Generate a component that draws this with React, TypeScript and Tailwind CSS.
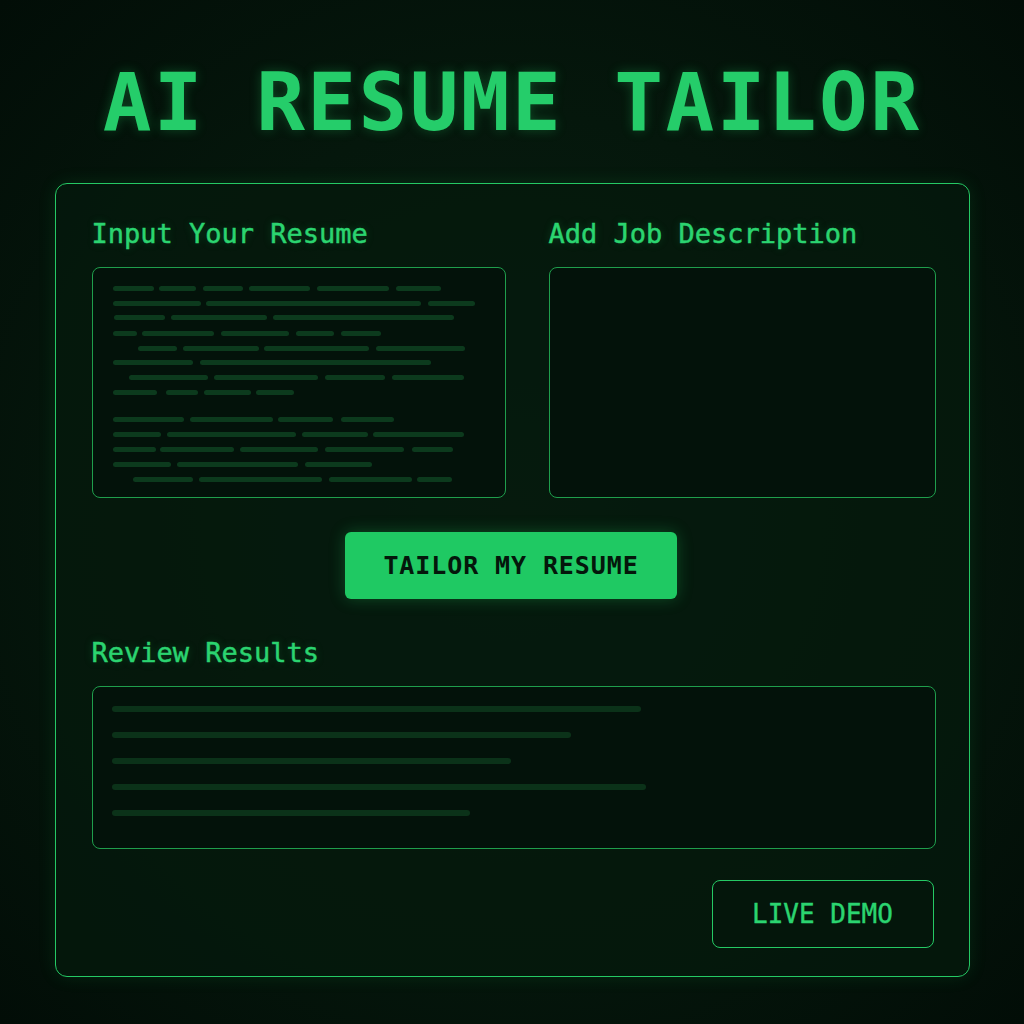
import React from 'react';

const MONO = "font-['DejaVu_Sans_Mono','Liberation_Mono',monospace]";

// resume skeleton: each row is a list of [x0, x1] in page px; box inner left = 93
const resumeRows: { gap: number; segs: [number, number][] }[] = [
  { gap: 0, segs: [[113, 154], [159, 196], [203, 243], [249, 310], [317, 389], [396, 441]] },
  { gap: 10, segs: [[113, 201], [206, 421], [428, 475]] },
  { gap: 9, segs: [[114, 165], [171, 267], [273, 454]] },
  { gap: 11, segs: [[113, 137], [142, 214], [221, 289], [296, 334], [341, 381]] },
  { gap: 10, segs: [[138, 177], [183, 259], [264, 369], [376, 465]] },
  { gap: 9, segs: [[113, 193], [200, 431]] },
  { gap: 10, segs: [[129, 208], [214, 318], [325, 385], [392, 464]] },
  { gap: 10, segs: [[113, 157], [166, 198], [204, 251], [256, 294]] },
  { gap: 22, segs: [[113, 184], [190, 273], [278, 333], [341, 394]] },
  { gap: 10, segs: [[113, 161], [167, 296], [302, 368], [373, 464]] },
  { gap: 10, segs: [[113, 156], [160, 234], [240, 318], [325, 404], [412, 453]] },
  { gap: 10, segs: [[113, 171], [177, 298], [305, 372]] },
  { gap: 10, segs: [[133, 193], [199, 322], [329, 412], [417, 452]] },
];

const resultBars = [529, 459, 399, 534, 358];

function SkeletonRow({ gap, segs }: { gap: number; segs: [number, number][] }) {
  let prev = 93;
  return (
    <div className="flex h-[5px]" style={{ marginTop: gap }}>
      {segs.map(([a, b], i) => {
        const ml = a - prev;
        prev = b;
        return (
          <div
            key={i}
            className="h-full rounded-full bg-[#0c3a1d]"
            style={{ marginLeft: ml, width: b - a }}
          />
        );
      })}
    </div>
  );
}

function Heading({ children }: { children: React.ReactNode }) {
  return (
    <h2 className="text-[27px] leading-none text-[#2bd470] [-webkit-text-stroke:0.5px_#2bd470] [text-shadow:0_0_8px_rgba(34,197,94,0.25)]">
      {children}
    </h2>
  );
}

export default function App() {
  return (
    <div
      className={`min-h-screen w-full flex flex-col items-center bg-[radial-gradient(ellipse_at_center,#0a2013_0%,#05170c_55%,#020d07_100%)] ${MONO}`}
    >
      <h1 className="pt-[62px] text-[81px] leading-none font-bold tracking-[2.4px] text-[#25cd6a] [text-shadow:0_0_12px_rgba(34,197,94,0.3)]">
        AI RESUME TAILOR
      </h1>

      <div className="mt-[40px] w-[915px] h-[794px] rounded-[12px] border border-[#25c964] bg-[#05190d]/80 pl-[36px] pr-[33px] pt-[36px] shadow-[0_0_18px_rgba(34,197,94,0.12)]">
        <div className="flex gap-[43px]">
          <div className="w-[414px]">
            <Heading>Input Your Resume</Heading>
            <div className="mt-[20px] h-[231px] rounded-[8px] border border-[#1f9e4c] bg-[#03120a] pt-[18px]">
              {resumeRows.map((r, i) => (
                <SkeletonRow key={i} gap={r.gap} segs={r.segs} />
              ))}
            </div>
          </div>
          <div className="w-[387px]">
            <Heading>Add Job Description</Heading>
            <div className="mt-[20px] h-[231px] rounded-[8px] border border-[#1f9e4c] bg-[#03120a]" />
          </div>
        </div>

        <div className="mt-[34px] flex justify-center pr-[5px]">
          <button className="w-[332px] h-[67px] rounded-[6px] bg-[#1fc963] text-[25px] font-bold leading-none tracking-[0.9px] text-[#04170b] shadow-[0_0_16px_rgba(34,197,94,0.3)]">
            TAILOR MY RESUME
          </button>
        </div>

        <div className="mt-[40px]">
          <Heading>Review Results</Heading>
        </div>
        <div className="mt-[20px] h-[163px] rounded-[8px] border border-[#1f9e4c] bg-[#03120a] pl-[19px] pt-[19px] flex flex-col gap-[20px]">
          {resultBars.map((w, i) => (
            <div key={i} className="h-[6px] rounded-full bg-[#0b3219]" style={{ width: w }} />
          ))}
        </div>

        <div className="mt-[31px] flex justify-end pr-[2px]">
          <button className="w-[222px] h-[68px] rounded-[8px] border border-[#25c964] text-[26px] leading-none text-[#2bd470] [-webkit-text-stroke:0.4px_#2bd470] bg-[#04160b]">
            LIVE DEMO
          </button>
        </div>
      </div>
    </div>
  );
}
